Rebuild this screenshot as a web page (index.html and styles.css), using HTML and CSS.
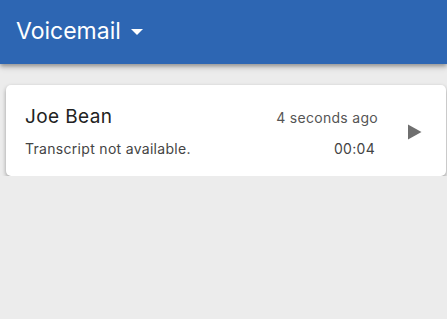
FILE: index.html
```html
<!DOCTYPE html>
<html lang="en">
<head>
  <meta charset="UTF-8">
  <title>Voicemail</title>
  <link rel="stylesheet" href="styles.css">
</head>
<body>

  <div class="pasek">
    <span class="tytul">Voicemail</span>
    <span class="strzalka"></span>
  </div>

  <div class="lista">
    <div class="karta">
      <div class="tresc">
        <div class="wiersz">
          <span class="nazwa">Joe Bean</span>
          <span class="kiedy">4 seconds ago</span>
        </div>
        <div class="wiersz">
          <span class="opis">Transcript not available.</span>
          <span class="dlugosc">00:04</span>
        </div>
      </div>
      <div class="graj">
        <svg width="15" height="16" viewBox="0 0 15 16"><path d="M1 0.5v15l13.5-7.5z" fill="#6f6f6f"/></svg>
      </div>
    </div>
  </div>

</body>
</html>
```

FILE: styles.css
```css
body {
  margin: 0;
  background-color: #ececec;
  font-family: Inter, "Liberation Sans", sans-serif;
  overflow: hidden;
}

.pasek {
  height: 64px;
  background-color: #2d66b3;
  display: flex;
  align-items: center;
  padding: 0 16px;
  box-shadow: 0 2px 4px rgba(0, 0, 0, 0.3), 0 4px 6px rgba(0, 0, 0, 0.12);
  position: relative;
}

.tytul {
  color: white;
  font-size: 23px;
  margin-top: -2px;
}

.strzalka {
  width: 0;
  height: 0;
  border-left: 6.5px solid transparent;
  border-right: 6.5px solid transparent;
  border-top: 6.5px solid white;
  margin-left: 10px;
  margin-top: -1px;
}

.lista {
  padding: 21px 1px 0 6px;
}

.karta {
  background: white;
  border-radius: 5px;
  box-shadow: 0 2px 4px rgba(0, 0, 0, 0.35);
  display: flex;
  align-items: center;
  height: 91px;
}

.tresc {
  flex: 1;
  padding: 1px 68px 0 19px;
}

.wiersz {
  display: flex;
  justify-content: space-between;
  align-items: baseline;
}

.wiersz + .wiersz {
  margin-top: 12px;
}

.nazwa {
  font-size: 19px;
  letter-spacing: 0.4px;
  color: #222;
}

.kiedy {
  font-size: 14px;
  letter-spacing: 0.3px;
  color: #555;
}

.opis {
  font-size: 14px;
  letter-spacing: 0.3px;
  color: #444;
}

.dlugosc {
  font-size: 14px;
  letter-spacing: 0.3px;
  color: #444;
  margin-right: 3px;
}

.graj {
  position: relative;
  width: 0;
}

.graj svg {
  position: absolute;
  right: 24px;
  top: -7px;
}
```
